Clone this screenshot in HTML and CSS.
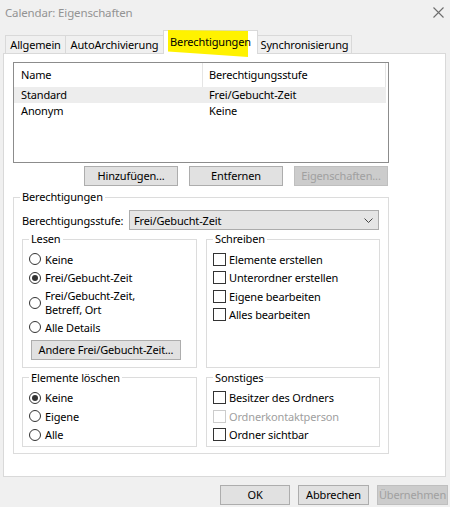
FILE: index.html
```html
<!DOCTYPE html>
<html lang="de">
<head>
<meta charset="utf-8">
<title>Calendar: Eigenschaften</title>
<link rel="stylesheet" href="styles.css">
</head>
<body>
<div class="titlebar">
  <span class="title">Calendar: Eigenschaften</span>
  <svg class="close" width="11" height="11" viewBox="0 0 11 11"><path d="M0.5 0.5L10.5 10.5M10.5 0.5L0.5 10.5" stroke="#6d6d6d" stroke-width="1.1" fill="none"/></svg>
</div>
<div class="tabs">
  <div class="tab t1">Allgemein</div>
  <div class="tab t2">AutoArchivierung</div>
  <div class="tab t3 active"><span class="label">Berechtigungen</span></div>
  <div class="tab t4">Synchronisierung</div>
</div>
<div class="pane">
  <div class="list">
    <div class="lrow head"><div class="c1">Name</div><div class="c2">Berechtigungsstufe</div></div>
    <div class="lrow sel"><div class="c1">Standard</div><div class="c2">Frei/Gebucht-Zeit</div></div>
    <div class="lrow"><div class="c1">Anonym</div><div class="c2">Keine</div></div>
  </div>
  <div class="btnrow">
    <button class="btn wide">Hinzufügen...</button>
    <button class="btn wide">Entfernen</button>
    <button class="btn wide disabled">Eigenschaften...</button>
  </div>
  <fieldset class="perm">
    <legend>Berechtigungen</legend>
    <div class="level">
      <span class="level-label">Berechtigungsstufe:</span>
      <div class="combo"><span>Frei/Gebucht-Zeit</span><svg width="9" height="5" viewBox="0 0 9 5"><path d="M0.5 0.5L4.5 4.5L8.5 0.5" stroke="#444" stroke-width="1" fill="none"/></svg></div>
    </div>
    <div class="groups">
      <fieldset class="grp read">
        <legend>Lesen</legend>
        <div class="opt"><span class="radio"></span>Keine</div>
        <div class="opt"><span class="radio on"></span>Frei/Gebucht-Zeit</div>
        <div class="opt two"><span class="radio"></span><span class="twotext">Frei/Gebucht-Zeit,<br>Betreff, Ort</span></div>
        <div class="opt"><span class="radio"></span>Alle Details</div>
        <button class="btn other">Andere Frei/Gebucht-Zeit...</button>
      </fieldset>
      <fieldset class="grp">
        <legend>Schreiben</legend>
        <div class="opt"><span class="check"></span>Elemente erstellen</div>
        <div class="opt"><span class="check"></span>Unterordner erstellen</div>
        <div class="opt"><span class="check"></span>Eigene bearbeiten</div>
        <div class="opt"><span class="check"></span>Alles bearbeiten</div>
      </fieldset>
      <fieldset class="grp">
        <legend>Elemente löschen</legend>
        <div class="opt"><span class="radio on"></span>Keine</div>
        <div class="opt"><span class="radio"></span>Eigene</div>
        <div class="opt"><span class="radio"></span>Alle</div>
      </fieldset>
      <fieldset class="grp">
        <legend>Sonstiges</legend>
        <div class="opt"><span class="check"></span>Besitzer des Ordners</div>
        <div class="opt off"><span class="check"></span>Ordnerkontaktperson</div>
        <div class="opt"><span class="check"></span>Ordner sichtbar</div>
      </fieldset>
    </div>
  </fieldset>
</div>
<div class="footer">
  <button class="btn foot">OK</button>
  <button class="btn foot">Abbrechen</button>
  <button class="btn foot disabled">Übernehmen</button>
</div>
</body>
</html>
```
FILE: styles.css
```css
* { box-sizing: border-box; }
html, body { margin: 0; padding: 0; }
body {
  width: 450px;
  height: 507px;
  overflow: hidden;
  background: #f0f0f0;
  font-family: "Noto Sans", "Liberation Sans", sans-serif;
  font-size: 11px;
  letter-spacing: -0.15px;
  color: #000;
}

.titlebar {
  height: 25px;
  display: flex;
  align-items: center;
  justify-content: space-between;
  padding: 0 6px 0 5px;
}
.title { color: #939393; font-size: 11.5px; }
.close { display: block; }

.tabs {
  height: 28px;
  display: flex;
  align-items: flex-end;
  padding-left: 5px;
}
.tab {
  height: 18px;
  line-height: 17px;
  border: 1px solid #d9d9d9;
  border-bottom: none;
  background: #f0f0f0;
  text-align: center;
  margin-left: -1px;
}
.t1 { width: 61px; margin-left: 0; }
.t2 { width: 99px; }
.t3 { width: 95px; }
.t4 { width: 95px; }
.tab.active {
  position: relative;
  z-index: 1;
  height: 24px;
  margin-bottom: -1px;
  line-height: 22px;
  padding-bottom: 2px;
  background: #fff;
}
.tab.active::before {
  content: "";
  position: absolute;
  left: 4px;
  width: 80px;
  top: -1px;
  height: 27px;
  background: #fff200;
  clip-path: polygon(0 0, 100% 1px, 100% 100%, 0 80%);
  z-index: -1;
}

.pane {
  height: 424px;
  margin: 0 4px 0 3px;
  background: #fff;
  border: 1px solid #d9d9d9;
  padding: 8px 0 0 9px;
}

.list {
  width: 376px;
  height: 101px;
  border: 1px solid #8c8c8c;
  background: #fff;
}
.lrow { display: flex; height: 16px; line-height: 16px; }
.lrow.head { height: 24px; line-height: 24px; }
.c1 { width: 189px; padding-left: 7px; }
.c2 { width: 183px; padding-left: 6px; }
.head .c1 { border-right: 1px solid #e5e5e5; }
.head .c2 { border-right: 1px solid #e5e5e5; }
.lrow.sel .c1, .lrow.sel .c2 { background: #ededed; }

.btnrow {
  width: 376px;
  display: flex;
  justify-content: flex-end;
  gap: 11px;
  padding-right: 1px;
  margin-top: 3px;
}
.btn {
  font: inherit;
  letter-spacing: inherit;
  color: #000;
  background: #e1e1e1;
  border: 1px solid #adadad;
  padding: 0;
  height: 20px;
  line-height: 18px;
  white-space: nowrap;
}
.btn.wide { width: 94px; }
.btn.disabled { background: #cccccc; border-color: #bfbfbf; color: #a0a0a0; }

fieldset {
  margin: 0;
  border: 1px solid #dcdcdc;
  min-width: 0;
}
legend {
  padding: 0 2px;
  line-height: 14px;
}
.perm {
  width: 376px;
  margin-top: 4px;
  padding: 0 8px 6px 8px;
}
.perm > legend { margin-left: -2px; }

.level {
  display: flex;
  align-items: center;
  height: 20px;
  margin-top: 6px;
}
.level-label { width: 107px; }
.combo {
  width: 250px;
  height: 20px;
  background: #e5e5e5;
  border: 1px solid #acacac;
  display: flex;
  align-items: center;
  justify-content: space-between;
  padding: 0 5px 0 4px;
}
.combo svg { display: block; }

.groups {
  display: grid;
  grid-template-columns: 175px 174px;
  column-gap: 9px;
  row-gap: 3px;
  margin-top: 2px;
}
.grp { padding: 4px 6px 2px 6px; }
.grp.read { padding-bottom: 7px; }

.opt {
  display: flex;
  align-items: center;
  height: 18.5px;
  white-space: nowrap;
}
.opt.two { height: 31px; padding: 2px 0 1px; }
.twotext { line-height: 14px; }
.opt.off { color: #a0a0a0; }

.radio {
  flex: none;
  width: 12px;
  height: 12px;
  border: 1px solid #333;
  border-radius: 50%;
  background: #fff;
  margin-right: 4px;
  display: flex;
  align-items: center;
  justify-content: center;
}
.radio.on::after {
  content: "";
  width: 6px;
  height: 6px;
  border-radius: 50%;
  background: #333;
}
.check {
  flex: none;
  width: 13px;
  height: 13px;
  border: 1px solid #333;
  background: #fff;
  margin-right: 3px;
}
.opt.off .check { border-color: #cccccc; }

.btn.other {
  display: block;
  width: 150px;
  margin: 3px 0 0 2px;
}

.footer {
  display: flex;
  justify-content: flex-end;
  gap: 8px;
  padding-right: 2px;
  margin-top: 8px;
}
.btn.foot { width: 71px; }
.btn.foot:first-child { width: 70px; }
```
